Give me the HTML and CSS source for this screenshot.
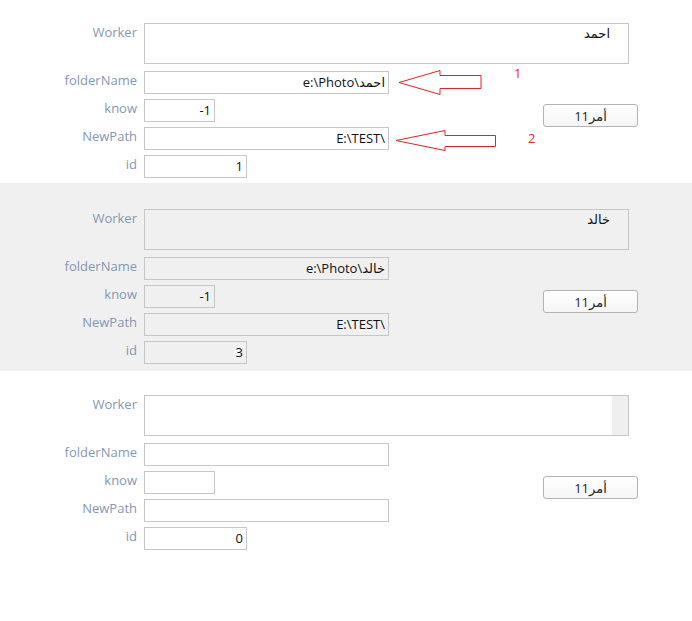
FILE: index.html
```html
<!DOCTYPE html>
<html lang="ar">
<head>
    <meta charset="UTF-8">
    <title>Workers</title>
    <link rel="stylesheet" href="styles.css">
</head>
<body>

    <div class="record">
        <div class="form">
            <div class="label">Worker</div>
            <div class="box worker"><span>احمد</span></div>
            <div class="label">folderName</div>
            <div class="box wide">e:\Photo\احمد</div>
            <div class="label">know</div>
            <div class="box small">-1</div>
            <button class="cmd">أمر11</button>
            <div class="label">NewPath</div>
            <div class="box wide">E:\TEST\</div>
            <div class="label">id</div>
            <div class="box mid">1</div>
        </div>

        <!-- arrows drawn over the form -->
        <svg class="marks" width="692" height="186" viewBox="0 0 692 186">
            <polygon points="399,82.5 440,70.5 440,75.5 481,75.5 481,88.5 440,88.5 440,94.5" />
            <polygon points="396,140.5 445,130.5 445,135.5 495.5,135.5 495.5,146.5 445,146.5 445,150.5" />
            <text x="514" y="78">1</text>
            <text x="528" y="143">2</text>
        </svg>
    </div>

    <div class="record alt">
        <div class="form">
            <div class="label">Worker</div>
            <div class="box worker"><span>خالد</span></div>
            <div class="label">folderName</div>
            <div class="box wide">e:\Photo\خالد</div>
            <div class="label">know</div>
            <div class="box small">-1</div>
            <button class="cmd">أمر11</button>
            <div class="label">NewPath</div>
            <div class="box wide">E:\TEST\</div>
            <div class="label">id</div>
            <div class="box mid">3</div>
        </div>
    </div>

    <div class="record last">
        <div class="form">
            <div class="label">Worker</div>
            <div class="box worker scroll"><span></span></div>
            <div class="label">folderName</div>
            <div class="box wide"></div>
            <div class="label">know</div>
            <div class="box small"></div>
            <button class="cmd">أمر11</button>
            <div class="label">NewPath</div>
            <div class="box wide"></div>
            <div class="label">id</div>
            <div class="box mid">0</div>
        </div>
    </div>

</body>
</html>
```

FILE: styles.css
```css
body {
    margin: 0;
    width: 692px;
    background: #ffffff;
    font-family: 'Open Sans', 'DejaVu Sans', sans-serif;
    font-size: 13px;
}

.record {
    position: relative;
    height: 186px;
    padding-top: 23px;
    box-sizing: border-box;
}

.record.alt {
    height: 188px;
    margin-top: -3px;
    padding-top: 26px;
    background-color: #f0f0f0;
}

.record.last {
    padding-top: 24px;
}

.form {
    display: grid;
    grid-template-columns: 137px 406px 95px;
    grid-template-rows: 43px repeat(4, 23px);
    row-gap: 5px;
}

.label {
    grid-column: 1;
    text-align: right;
    line-height: 18px;
    color: #8497b0;
}

.box {
    grid-column: 2;
    margin-left: 7px;
    height: 23px;
    box-sizing: border-box;
    border: 1px solid #c6c6c6;
    padding: 0 3px;
    line-height: 21px;
    text-align: right;
    color: #111111;
    white-space: nowrap;
    overflow: hidden;
}

.box.worker {
    grid-column: 2 / 4;
    width: 485px;
    height: 41px;
    padding: 1px 18px 0 3px;
    line-height: 17px;
    position: relative;
}

.box.worker span {
    display: block;
}

.box.scroll::after {
    content: "";
    position: absolute;
    top: 0;
    right: 0;
    bottom: 0;
    width: 16px;
    background-color: #efefef;
}

.box.wide {
    width: 245px;
}

.box.small {
    width: 71px;
}

.box.mid {
    width: 103px;
}

.cmd {
    grid-column: 3;
    grid-row: 3 / 5;
    align-self: start;
    margin-top: 5px;
    width: 95px;
    height: 23px;
    padding: 0;
    border: 1px solid #b4b4b4;
    border-radius: 3px;
    background: linear-gradient(#ffffff, #f5f5f5);
    font-family: 'Open Sans', 'DejaVu Sans', sans-serif;
    font-size: 13px;
    color: #1e1e1e;
}

.marks {
    position: absolute;
    top: 0;
    left: 0;
}

.marks polygon {
    fill: none;
    stroke: #ec1c24;
    stroke-width: 1;
}

.marks text {
    fill: #ec1c24;
    font-family: 'Open Sans', sans-serif;
    font-size: 13px;
}
```
